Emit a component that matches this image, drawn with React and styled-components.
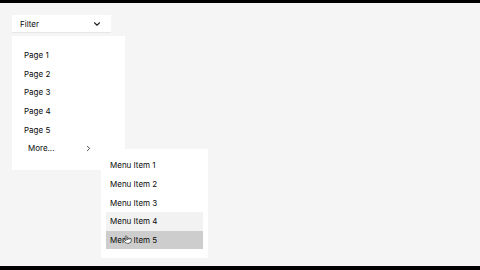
import styled, { createGlobalStyle } from "styled-components";
import { ChevronDown, ChevronRight, Pointer } from "lucide-react";

const GlobalStyle = createGlobalStyle`
    html, body {
        margin: 0;
        padding: 0;
        width: 480px;
        height: 270px;
        overflow: hidden;
        background: #000;
    }
    * {
        box-sizing: border-box;
    }
`

const pages = ["Page 1", "Page 2", "Page 3", "Page 4", "Page 5"];
const subItems = ["Menu Item 1", "Menu Item 2", "Menu Item 3", "Menu Item 4", "Menu Item 5"];

function App() {
    return (
        <>
        <GlobalStyle />
        <Screen>
            <Stage>
                <FilterButton>
                    <span>Filter</span>
                    <ChevronDown size={10} strokeWidth={2.6} />
                </FilterButton>
                <Panel>
                    {pages.map((p) => (
                        <PageRow key={p}>{p}</PageRow>
                    ))}
                    <MoreRow>
                        <span>More...</span>
                        <ChevronRight size={9} strokeWidth={2.2} />
                    </MoreRow>
                    <SubMenu>
                        {subItems.map((s, i) => (
                            <SubItem key={s} $state={i === 3 ? "hover" : i === 4 ? "active" : ""}>
                                {s}
                                {i === 4 && (
                                    <Cursor>
                                        <Pointer size={9} strokeWidth={1.6} />
                                    </Cursor>
                                )}
                            </SubItem>
                        ))}
                    </SubMenu>
                </Panel>
            </Stage>
        </Screen>
        </>
    )
}

const Screen = styled.div`
    width: 480px;
    height: 270px;
    display: flex;
    flex-direction: column;
    padding: 3px 0 4px;
`

const Stage = styled.div`
    flex: 1;
    background: #f5f5f5;
    padding: 12px 0 0 12px;
    display: flex;
    flex-direction: column;
    align-items: flex-start;
    gap: 3px;
    font-family: "Inter", "Liberation Sans", sans-serif;
    font-size: 8px;
    color: #0a0a0a;
`

const FilterButton = styled.div`
    width: 99px;
    height: 18px;
    background: #fff;
    display: flex;
    align-items: center;
    justify-content: space-between;
    padding: 0 9px 0 8px;
    border-bottom: 1px solid #e6e6e6;

    svg {
        color: #222;
    }
`

const Panel = styled.div`
    position: relative;
    width: 113px;
    height: 134px;
    background: #fff;
    padding: 10px 0 0;
    display: flex;
    flex-direction: column;
`

const PageRow = styled.div`
    height: 18.6px;
    display: flex;
    align-items: center;
    padding-left: 12px;
`

const MoreRow = styled(PageRow)`
    padding: 0 32px 0 16px;
    justify-content: space-between;

    svg {
        color: #222;
    }
`

const SubMenu = styled.div`
    position: absolute;
    left: 89px;
    top: 113px;
    width: 107px;
    height: 109px;
    background: #fff;
    padding: 7px 5px 0;
    display: flex;
    flex-direction: column;
`

const SubItem = styled.div`
    position: relative;
    height: 18.7px;
    display: flex;
    align-items: center;
    padding-left: 4px;
    background: ${(p) => (p.$state === "active" ? "#cdcdcd" : p.$state === "hover" ? "#f2f2f2" : "transparent")};
`

const Cursor = styled.span`
    position: absolute;
    left: 17px;
    top: 4px;
    display: flex;

    svg {
        color: #222;
        fill: #fff;
    }
`

export default App;
